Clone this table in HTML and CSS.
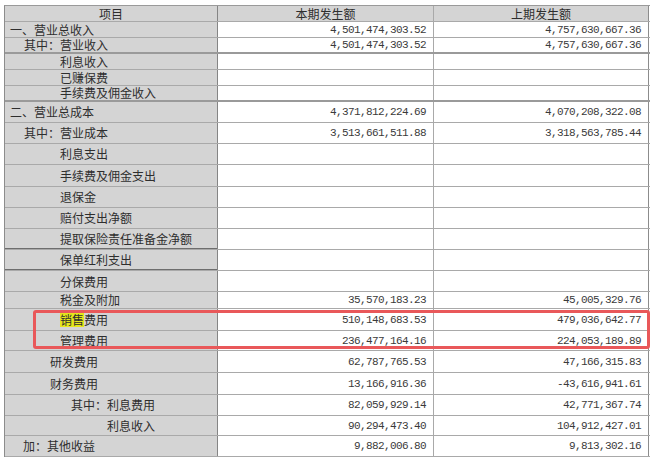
FILE: index.html
```html
<!DOCTYPE html>
<html lang="zh-CN">
<head>
<meta charset="utf-8">
<title>利润表</title>
<link rel="stylesheet" href="styles.css">
</head>
<body>
<div class="page">
  <div class="sheet">
    <div class="row head h16"><div class="c name center">项目</div><div class="c v center">本期发生额</div><div class="c v center">上期发生额</div></div>
    <div class="row h16"><div class="c name i0">一、营业总收入</div><div class="c v num">4,501,474,303.52</div><div class="c v num">4,757,630,667.36</div></div>
    <div class="row h16 thick"><div class="c name i1">其中：营业收入</div><div class="c v num">4,501,474,303.52</div><div class="c v num">4,757,630,667.36</div></div>
    <div class="row h16"><div class="c name i2">利息收入</div><div class="c v num"></div><div class="c v num"></div></div>
    <div class="row h16"><div class="c name i2">已赚保费</div><div class="c v num"></div><div class="c v num"></div></div>
    <div class="row h16 thick"><div class="c name i2">手续费及佣金收入</div><div class="c v num"></div><div class="c v num"></div></div>
    <div class="row h21"><div class="c name i0">二、营业总成本</div><div class="c v num">4,371,812,224.69</div><div class="c v num">4,070,208,322.08</div></div>
    <div class="row h21"><div class="c name i1">其中：营业成本</div><div class="c v num">3,513,661,511.88</div><div class="c v num">3,318,563,785.44</div></div>
    <div class="row h21"><div class="c name i2">利息支出</div><div class="c v num"></div><div class="c v num"></div></div>
    <div class="row h22"><div class="c name i2">手续费及佣金支出</div><div class="c v num"></div><div class="c v num"></div></div>
    <div class="row h21"><div class="c name i2">退保金</div><div class="c v num"></div><div class="c v num"></div></div>
    <div class="row h21"><div class="c name i2">赔付支出净额</div><div class="c v num"></div><div class="c v num"></div></div>
    <div class="row h21 dark"><div class="c name i2">提取保险责任准备金净额</div><div class="c v num"></div><div class="c v num"></div></div>
    <div class="row h21 dark"><div class="c name i2">保单红利支出</div><div class="c v num"></div><div class="c v num"></div></div>
    <div class="row h21 low"><div class="c name i2">分保费用</div><div class="c v num"></div><div class="c v num"></div></div>
    <div class="row h17"><div class="c name i2">税金及附加</div><div class="c v num">35,570,183.23</div><div class="c v num">45,005,329.76</div></div>
    <div class="row h22"><div class="c name i2"><span class="mark">销售</span>费用</div><div class="c v num">510,148,683.53</div><div class="c v num">479,036,642.77</div></div>
    <div class="row h20 low"><div class="c name i2">管理费用</div><div class="c v num">236,477,164.16</div><div class="c v num">224,053,189.89</div></div>
    <div class="row h22"><div class="c name i3">研发费用</div><div class="c v num">62,787,765.53</div><div class="c v num">47,166,315.83</div></div>
    <div class="row h22"><div class="c name i3">财务费用</div><div class="c v num">13,166,916.36</div><div class="c v num">-43,616,941.61</div></div>
    <div class="row h21"><div class="c name i4">其中：利息费用</div><div class="c v num">82,059,929.14</div><div class="c v num">42,771,367.74</div></div>
    <div class="row h20"><div class="c name i5">利息收入</div><div class="c v num">90,294,473.40</div><div class="c v num">104,912,427.01</div></div>
    <div class="row h21"><div class="c name i1b">加：其他收益</div><div class="c v num">9,882,006.80</div><div class="c v num">9,813,302.16</div></div>
  </div>
  <div class="callout"></div>
</div>
</body>
</html>
```

FILE: styles.css
```css
html, body {
  margin: 0;
  padding: 0;
  background: #ffffff;
}

.page {
  position: relative;
  width: 669px;
  height: 457px;
  overflow: hidden;
  padding-top: 5px;
  padding-left: 4px;
  box-sizing: border-box;
}

.sheet {
  width: 645px;
  border-top: 1px solid #9a9a9a;
  border-left: 1px solid #8c8c8c;
  font-family: "Noto Sans CJK SC", "Noto Sans", sans-serif;
  font-size: 12px;
  color: #2e2e2e;
}

.row {
  display: grid;
  grid-template-columns: 213px 216px 215px;
  box-sizing: border-box;
  border-bottom: 1px solid #a9a9a9;
}

.row.thick {
  border-bottom: 2px solid #9a9a9a;
}

.row.dark .name {
  box-shadow: inset 0 -1px 0 #6e6e6e;
}

.h16 { height: 16px; }
.h17 { height: 17px; }
.h20 { height: 20px; }
.h21 { height: 21px; }
.h22 { height: 22px; }

.c {
  display: flex;
  align-items: center;
  box-sizing: border-box;
  border-right: 1px solid #a9a9a9;
  line-height: 14px;
  white-space: nowrap;
}

.name {
  background: #d4d4d4;
  border-right: 1px solid #858585;
}

.v {
  background: #ffffff;
}

.head .c {
  background: #d4d4d4;
}

.v:last-child {
  border-right: 1px solid #8c8c8c;
}

.center {
  justify-content: center;
}

.num {
  justify-content: flex-end;
  padding-right: 7px;
  font-family: "Liberation Mono", "DejaVu Sans Mono", monospace;
  font-size: 11px;
  letter-spacing: -0.6px;
  color: #3a3a3a;
}

.low .c {
  align-items: flex-end;
  padding-bottom: 2px;
}

.i0 { padding-left: 5px; }
.i1 { padding-left: 19px; }
.i1b { padding-left: 18px; }
.i2 { padding-left: 55px; }
.i3 { padding-left: 45px; }
.i4 { padding-left: 66px; }
.i5 { padding-left: 102px; }

.mark {
  background: #e6e61c;
}

.callout {
  position: absolute;
  left: 33px;
  top: 310px;
  width: 617px;
  height: 39px;
  box-sizing: border-box;
  border: 3px solid #e9585a;
  border-radius: 3px;
}
```
